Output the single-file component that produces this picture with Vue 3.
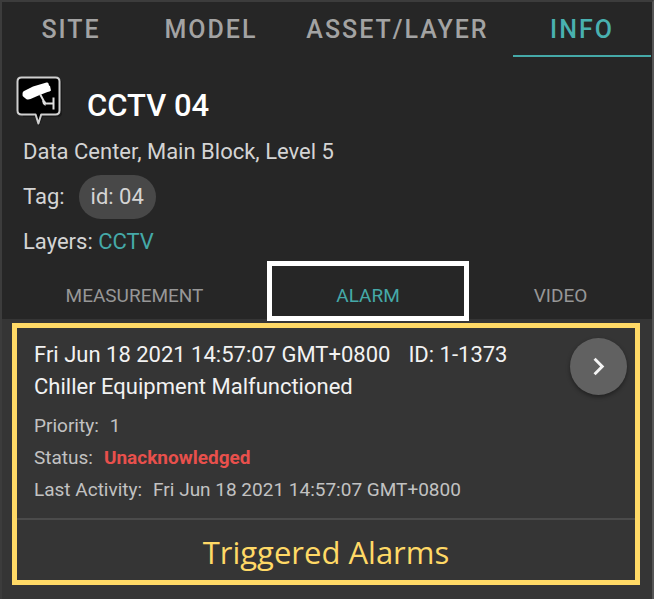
<script setup>
import { ref } from 'vue'

const tabs = ['SITE', 'MODEL', 'ASSET/LAYER', 'INFO']
const activeTab = ref('INFO')

const sections = ['MEASUREMENT', 'ALARM', 'VIDEO']
const activeSection = ref('ALARM')

const alarms = [
  {
    id: '1-1373',
    time: 'Fri Jun 18 2021 14:57:07 GMT+0800',
    message: 'Chiller Equipment Malfunctioned',
    priority: '1',
    status: 'Unacknowledged',
    lastActivity: 'Fri Jun 18 2021 14:57:07 GMT+0800',
  },
]
</script>

<template>
  <main class="panel">
    <header class="top">
      <nav class="tabs">
        <button
          v-for="tab in tabs"
          :key="tab"
          type="button"
          class="tab"
          :class="{ active: tab === activeTab }"
          @click="activeTab = tab"
        >{{ tab }}</button>
      </nav>

      <section class="asset">
        <div class="heading">
          <svg class="marker" viewBox="0 0 48 52" aria-hidden="true">
            <path class="marker-shadow" d="M7 4h35q4 0 4 4v30q0 4-4 4H27l-4 9-4-9H7z" />
            <path class="marker-body" d="M5.500 2.500h34q4 0 4 4v29q0 4-4 4H25.200L22.400 48.500 19.600 39.500H5.500q-4 0-4-4v-29q0-4 4-4z" />
            <path class="camera" d="M8 16L17 11.500 30.500 7.500q1.500-.3 2 1l.5 2 1 .5 1 4.500-1.500 1-2 .5-9 3.500-8 3.500q-2 .7-4 .2l-2.500-2q-2-1-1.500-3.500 0-2 1.500-2.700z" />
            <path class="mount" d="M24 19l4 7.500 1.500 2h8" />
            <path class="joint" d="M26 25.500l3.500 1v4.500l-2.500-2z" />
            <path class="mount" d="M37.500 22.500v12" />
          </svg>
          <h1>CCTV 04</h1>
        </div>
        <p class="line">Data Center, Main Block, Level 5</p>
        <p class="line tags">Tag: <span class="chip">id: 04</span></p>
        <p class="line">Layers: <a href="#cctv">CCTV</a></p>
      </section>

      <nav class="sections">
        <button
          v-for="section in sections"
          :key="section"
          type="button"
          class="section"
          :class="{ active: section === activeSection }"
          @click="activeSection = section"
        >{{ section }}</button>
      </nav>
    </header>

    <section class="alarms">
      <article v-for="alarm in alarms" :key="alarm.id" class="alarm">
        <div class="details">
          <p class="primary"><span>{{ alarm.time }}</span><span>ID: {{ alarm.id }}</span></p>
          <p class="primary">{{ alarm.message }}</p>
          <dl>
            <div class="row"><dt>Priority:</dt><dd>{{ alarm.priority }}</dd></div>
            <div class="row"><dt>Status:</dt><dd class="status">{{ alarm.status }}</dd></div>
            <div class="row"><dt>Last Activity:</dt><dd>{{ alarm.lastActivity }}</dd></div>
          </dl>
        </div>
        <button type="button" class="open" aria-label="Open alarm">
          <svg viewBox="0 0 24 24" aria-hidden="true"><path d="M8.590 16.580L13.170 12 8.590 7.410 10 6l6 6-6 6z" /></svg>
        </button>
      </article>
      <h2>Triggered Alarms</h2>
    </section>
  </main>
</template>

<style>
body {
  margin: 0;
  background: #353535;
}
</style>

<style scoped>
* {
  box-sizing: border-box;
}

.panel {
  min-height: 100vh;
  padding-bottom: 14px;
  border: solid #3c3c3c;
  border-width: 2px 2px 0;
  border-right-color: #555;
  background: #353535;
  color: #d4d4d4;
  font-family: Roboto, "Liberation Sans", sans-serif;
}

button {
  margin: 0;
  border: 0;
  background: none;
  font-family: inherit;
  cursor: pointer;
}

p,
h1,
h2,
dl,
dd {
  margin: 0;
}

.top {
  background: #262626;
}

.tabs {
  display: flex;
  padding-right: 1px;
}

.tab {
  flex: 1 1 auto;
  min-width: 138px;
  height: 55px;
  padding: 2px 22px 0;
  border-bottom: 2px solid transparent;
  color: #a3a3a3;
  font-size: 25px;
  font-weight: 500;
  letter-spacing: 2px;
}

.tab.active {
  border-color: #45a9a8;
  color: #49b1b0;
}

.asset {
  display: flex;
  flex-direction: column;
  gap: 7px;
  padding: 18px 14px 3px;
}

.heading {
  display: flex;
  gap: 23px;
  margin-bottom: 2px;
}

.marker {
  flex: none;
  width: 48px;
  height: 52px;
}

.marker-shadow {
  fill: #1a1a1a;
}

.marker-body {
  fill: #000;
  stroke: #cfcfcf;
  stroke-width: 2;
  stroke-linejoin: round;
}

.camera {
  fill: #fff;
}

.mount {
  fill: none;
  stroke: #e0e0e0;
  stroke-width: 2;
}

.joint {
  fill: #e0e0e0;
}

h1 {
  padding-top: 13px;
  color: #fff;
  font-size: 31px;
  font-weight: 500;
  line-height: 36px;
}

.line {
  padding-left: 7px;
  font-size: 22px;
  line-height: 32px;
}

.tags {
  display: flex;
  align-items: center;
  gap: 14px;
}

.chip {
  padding: 0 12px;
  border-radius: 22px;
  background: #484848;
  line-height: 44px;
}

.line a {
  color: #45a9a8;
  text-decoration: none;
}

.sections {
  display: grid;
  grid-template-columns: 265fr 202fr 183fr;
}

.section {
  height: 60px;
  margin-bottom: -2px;
  padding: 8px 0 0;
  border: 5px solid transparent;
  color: #979797;
  font-size: 19px;
}

.section.active {
  border-color: #fff;
  color: #45a9a8;
}

.alarms {
  margin: 4px 12px 0 10px;
  border: 5px solid #ffd966;
}

.alarm {
  display: flex;
  justify-content: space-between;
  padding: 10px 8px 12px 17px;
  border-bottom: 2px solid #4b4b4b;
}

.details {
  padding-top: 1px;
}

.primary {
  display: flex;
  gap: 18px;
  color: #f2f2f2;
  font-size: 22px;
  line-height: 32px;
}

dl {
  padding-top: 7px;
  color: #c2c2c2;
  font-size: 19px;
  line-height: 32px;
}

.row {
  display: flex;
  gap: 11px;
}

.status {
  color: #e8504c;
  font-weight: 700;
}

.open {
  display: grid;
  place-items: center;
  flex: none;
  width: 57px;
  height: 57px;
  padding: 0;
  border-radius: 50%;
  background: #616161;
  box-shadow: 0 2px 4px #0006;
}

.open svg {
  width: 35px;
  fill: #f4f4f4;
}

h2 {
  padding-top: 4px;
  color: #ffd966;
  font-family: "Open Sans", sans-serif;
  font-size: 31px;
  font-weight: 400;
  line-height: 56px;
  text-align: center;
}
</style>
